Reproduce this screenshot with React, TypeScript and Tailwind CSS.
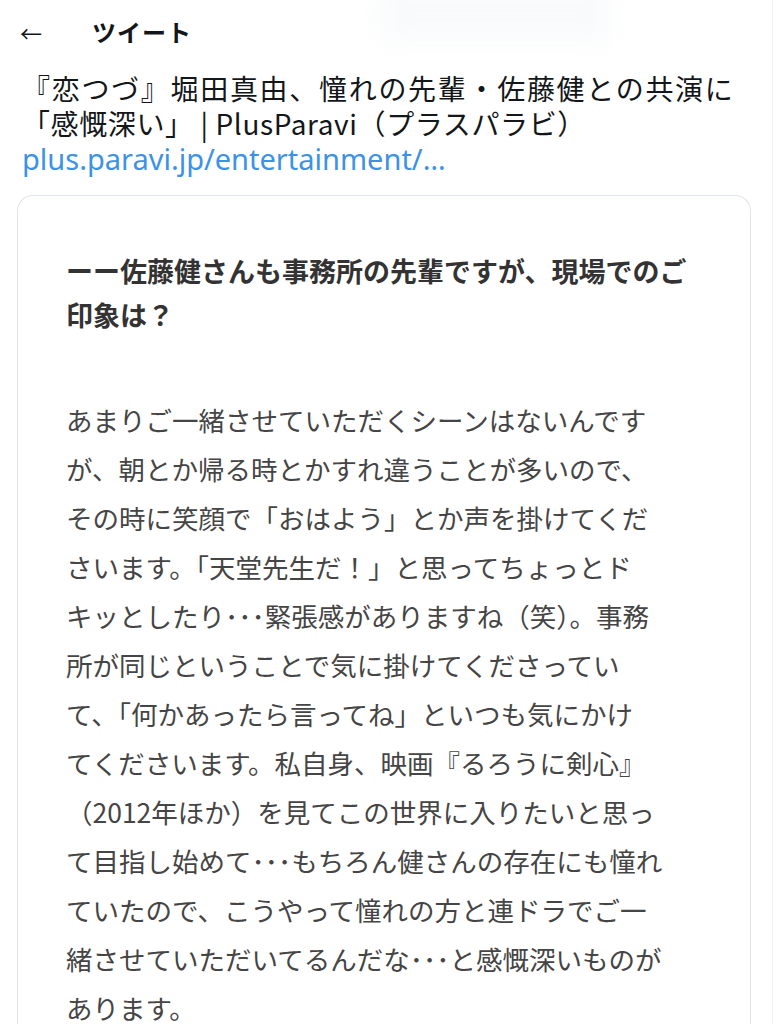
import React from "react";

const heading = ["ーー佐藤健さんも事務所の先輩ですが、現場でのご", "印象は？"];
const body = [
  "あまりご一緒させていただくシーンはないんです",
  "が、朝とか帰る時とかすれ違うことが多いので、",
  "その時に笑顔で「おはよう」とか声を掛けてくだ",
  "さいます。「天堂先生だ！」と思ってちょっとド",
  "キッとしたり･･･緊張感がありますね（笑）。事務",
  "所が同じということで気に掛けてくださってい",
  "て、「何かあったら言ってね」といつも気にかけ",
  "てくださいます。私自身、映画『るろうに剣心』",
  "（2012年ほか）を見てこの世界に入りたいと思っ",
  "て目指し始めて･･･もちろん健さんの存在にも憧れ",
  "ていたので、こうやって憧れの方と連ドラでご一",
  "緒させていただいてるんだな･･･と感慨深いものが",
  "あります。",
];

export default function App() {
  return (
    <div className="w-[776px] h-[1024px] overflow-hidden bg-white relative font-['Noto_Sans_CJK_JP',sans-serif]">
      <div className="absolute top-[-10px] left-[380px] w-[230px] h-[50px] bg-[#f4f6f9] blur-[14px] opacity-60" />
      <div className="border-r border-[#eef1f4] w-[773px] h-full relative">
        <div className="h-[64px] flex items-center pl-[20px]">
          <span className="text-[22px] leading-none text-[#14171a] w-[72px]">←</span>
          <span className="text-[24px] font-bold text-[#14171a] tracking-[1px]">ツイート</span>
        </div>
        <div className="px-[22px] pt-[7px] text-[28px] leading-[35px] text-[#14171a]">
          <div className="whitespace-nowrap tracking-[1.7px]">『恋つづ』堀田真由、憧れの先輩・佐藤健との共演に</div>
          <div className="whitespace-nowrap tracking-[0.6px]">「感慨深い」 | PlusParavi（プラスパラビ）</div>
          <div className="text-[#3b92e6] text-[29px] font-['Noto_Sans',sans-serif] tracking-normal whitespace-nowrap">plus.paravi.jp/entertainment/…</div>
        </div>
        <div className="ml-[17px] w-[734px] mt-[19px] border border-[#dfe4ea] border-b-0 rounded-t-[16px] pl-[48px] pt-[53px] pb-[40px]">
          <div className="text-[27px] leading-[44px] font-bold text-[#333]">
            {heading.map((l, i) => (
              <div key={i} className="whitespace-nowrap">{l}</div>
            ))}
          </div>
          <div className="mt-[58px] text-[26.5px] leading-[49px] text-[#454545]">
            {body.map((l, i) => (
              <div key={i} className="whitespace-nowrap">{l}</div>
            ))}
          </div>
        </div>
      </div>
    </div>
  );
}
